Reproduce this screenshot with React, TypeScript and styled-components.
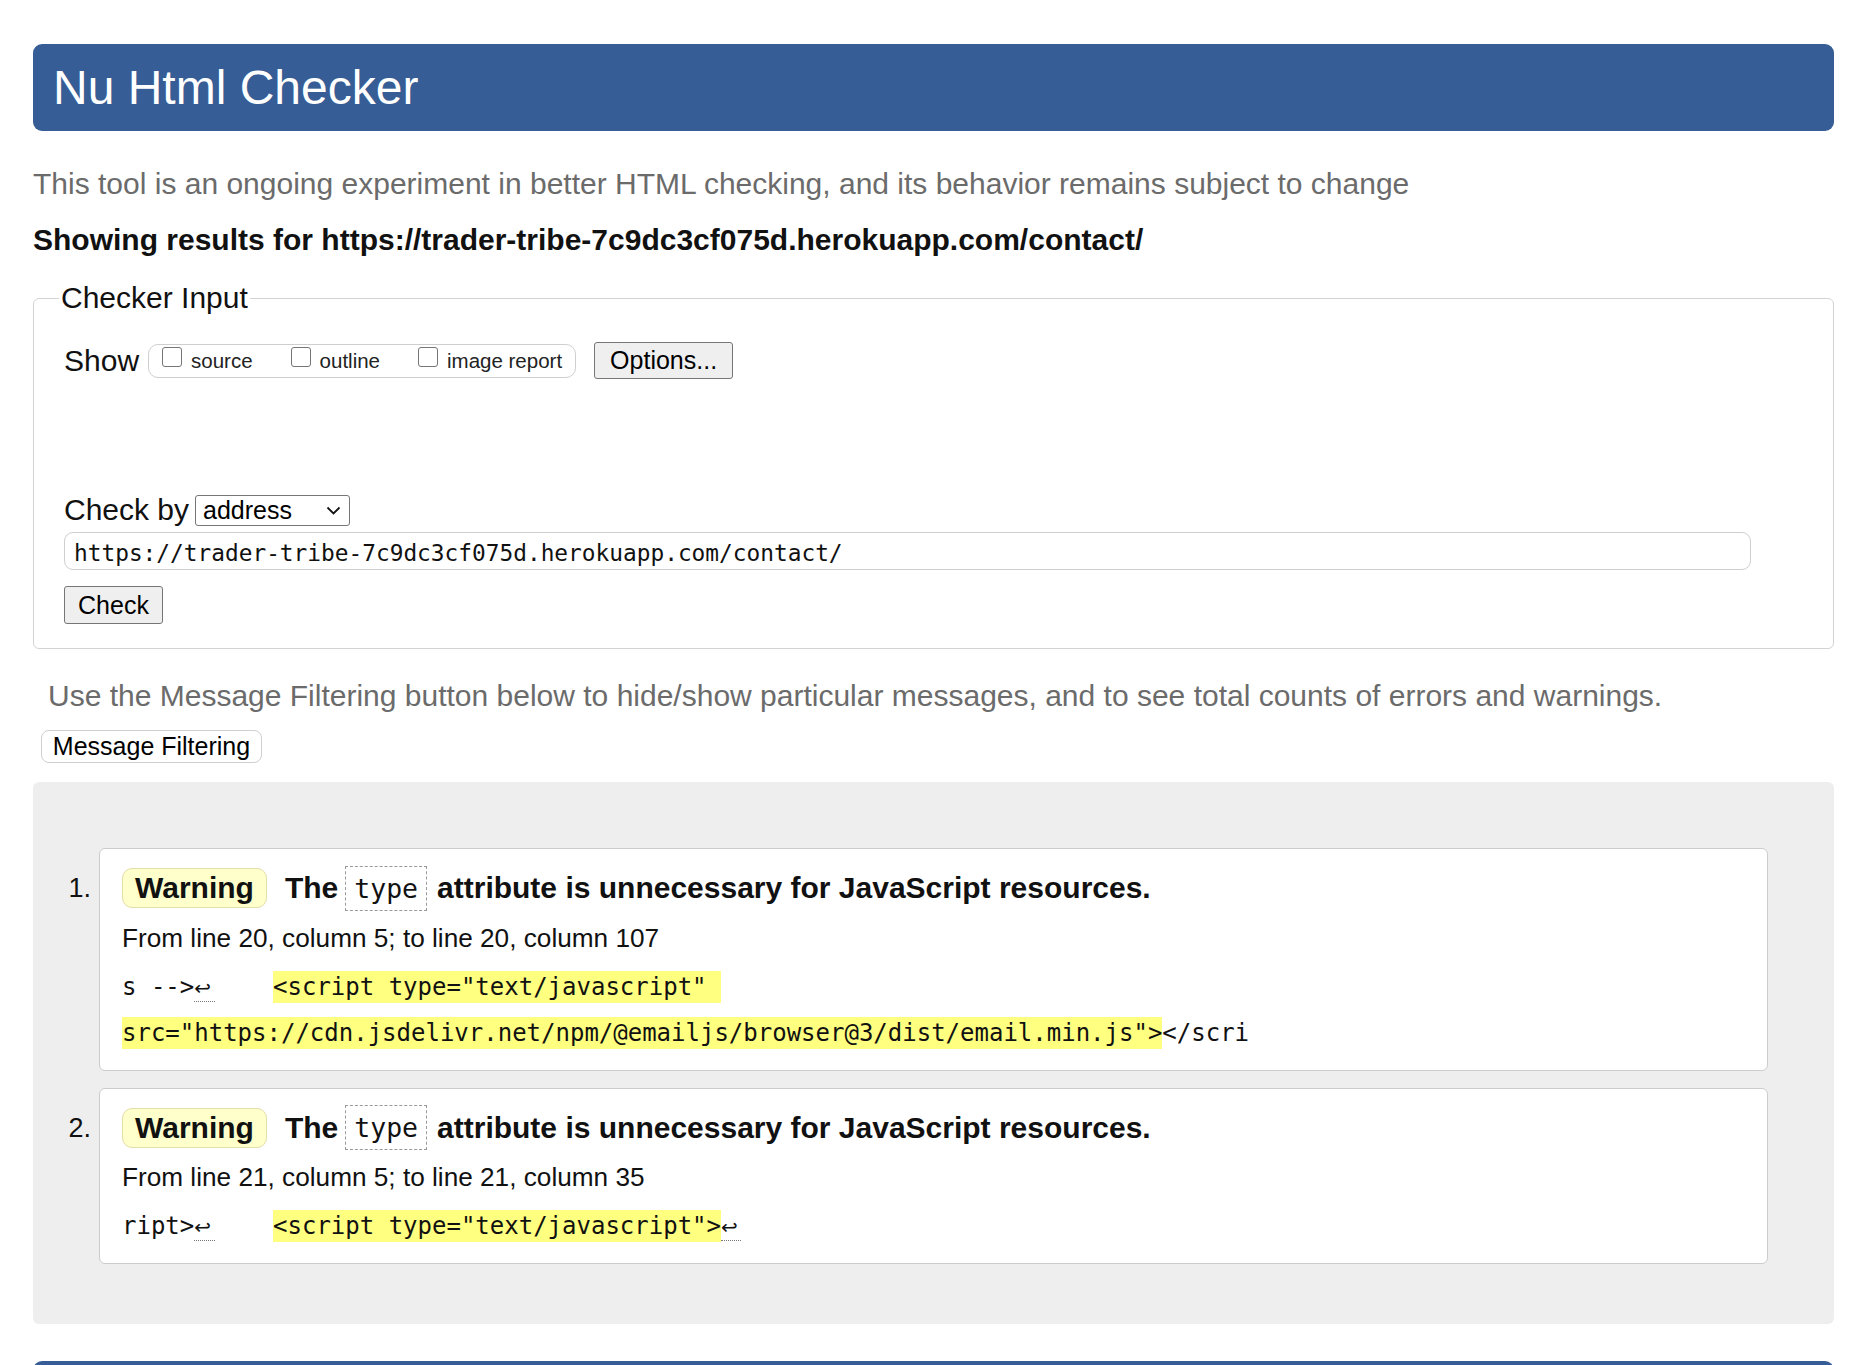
import styled, { createGlobalStyle } from "styled-components";

const GlobalStyle = createGlobalStyle`
  html, body {
    margin: 0;
    padding: 0;
    background: #fff;
  }
  body {
    font-family: "Liberation Sans", Arial, sans-serif;
    color: #000;
  }
`;

const MONO = `"DejaVu Sans Mono", "Liberation Mono", monospace`;

const Page = styled.div`
  width: 1801px;
  margin-left: 33px;
  padding-top: 44px;
`;

const Banner = styled.h1`
  margin: 0;
  height: 87px;
  display: flex;
  align-items: center;
  padding: 0 20px;
  background: #365d95;
  border-radius: 9px;
  color: #fff;
  font-size: 48px;
  font-weight: normal;
`;

const Note = styled.p<{ $top: number; $indent?: number }>`
  margin: ${({ $top }) => $top}px 0 0 ${({ $indent }) => $indent || 0}px;
  font-size: 30px;
  line-height: 36px;
  color: #6b6b6b;
`;

const ResultsFor = styled.h2`
  margin: 20px 0 0;
  font-size: 30px;
  line-height: 36px;
  font-weight: bold;
  color: #111;
`;

const Fieldset = styled.fieldset`
  margin: 22px 0 0;
  padding: 0 30px 24px;
  border: 1px solid #d3d3d3;
  border-radius: 6px;
  min-width: 0;
`;

const Legend = styled.legend`
  margin-left: -5px;
  padding: 0 2px;
  font-size: 30px;
  line-height: 36px;
  color: #111;
`;

const Row = styled.div<{ $top: number; $height: number }>`
  display: flex;
  align-items: center;
  margin-top: ${({ $top }) => $top}px;
  height: ${({ $height }) => $height}px;
`;

const Label = styled.span`
  font-size: 30px;
  line-height: 36px;
  color: #111;
`;

const CheckGroup = styled.div`
  display: flex;
  align-items: center;
  gap: 38px;
  height: 34px;
  box-sizing: border-box;
  margin-left: 9px;
  padding: 0 13px;
  border: 1px solid #cfcfcf;
  border-radius: 10px;
`;

const CheckOption = styled.label`
  display: flex;
  align-items: center;
  font-size: 20.5px;
  color: #222;
`;

const Box = styled.input`
  appearance: none;
  width: 20px;
  height: 20px;
  margin: -8px 9px 0 0;
  border: 1.5px solid #767676;
  border-radius: 3px;
  background: #fff;
`;

const Button = styled.button<{ $width: number; $height: number; $light?: boolean }>`
  width: ${({ $width }) => $width}px;
  height: ${({ $height }) => $height}px;
  padding: 0;
  font-family: "Liberation Sans", Arial, sans-serif;
  font-size: 25px;
  color: #000;
  background: ${({ $light }) => ($light ? "#fff" : "#efefef")};
  border: 1px solid ${({ $light }) => ($light ? "#cfcfcf" : "#767676")};
  border-radius: ${({ $light }) => ($light ? "8px" : "3px")};
`;

const OptionsButton = styled(Button)`
  margin-left: 18px;
`;

const SelectWrap = styled.div`
  position: relative;
  margin-left: 6px;
  width: 155px;
  height: 31px;
`;

const Select = styled.select`
  appearance: none;
  width: 100%;
  height: 100%;
  padding: 0 0 0 7px;
  font-family: "Liberation Sans", Arial, sans-serif;
  font-size: 25px;
  color: #000;
  background: #fff;
  border: 1px solid #767676;
  border-radius: 3px;
`;

const Chevron = styled.svg`
  position: absolute;
  right: 9px;
  top: 11px;
  pointer-events: none;
`;

const UrlInput = styled.input`
  display: block;
  box-sizing: border-box;
  width: 1687px;
  height: 38px;
  margin-top: 4px;
  padding: 3px 9px 0;
  font-family: ${MONO};
  font-size: 22.8px;
  color: #111;
  border: 1px solid #cfcfcf;
  border-radius: 9px;
`;

const CheckButton = styled(Button)`
  display: block;
  margin-top: 16px;
`;

const FilterButton = styled(Button)`
  display: block;
  margin: 16px 0 0 8px;
`;

const Panel = styled.div`
  margin-top: 19px;
  padding: 66px 66px 60px 8px;
  background: #eeeeee;
  border-radius: 6px;
  display: flex;
  flex-direction: column;
  gap: 17px;
`;

const MessageRow = styled.div`
  display: flex;
  align-items: flex-start;
`;

const Num = styled.div`
  width: 58px;
  box-sizing: border-box;
  padding-right: 8px;
  margin-top: 20px;
  text-align: right;
  font-size: 27px;
  line-height: 40px;
  color: #111;
`;

const Card = styled.div`
  flex: 1;
  padding: 16.5px 22px 14px;
  background: #fff;
  border: 1px solid #cccccc;
  border-radius: 6px;
`;

const Title = styled.div`
  display: flex;
  align-items: center;
  height: 45px;
  font-size: 30px;
  font-weight: bold;
  color: #111;
  white-space: nowrap;
`;

const Badge = styled.span`
  display: flex;
  align-items: center;
  height: 40px;
  box-sizing: border-box;
  margin-right: 18px;
  padding: 0 12px;
  background: #ffffcc;
  border: 1px solid #e2dea8;
  border-radius: 10px;
`;

const AttrCode = styled.code`
  display: flex;
  align-items: center;
  height: 45px;
  box-sizing: border-box;
  margin: 0 10px 0 7px;
  padding: 0 8px;
  font-family: ${MONO};
  font-size: 26.5px;
  font-weight: normal;
  border: 1px dashed #999;
`;

const Location = styled.p`
  margin: 9px 0 0;
  font-size: 26.2px;
  line-height: 36px;
  color: #111;
`;

const Extract = styled.p`
  margin: 8px 0 0;
  font-family: ${MONO};
  font-size: 24px;
  line-height: 46px;
  white-space: break-spaces;
  color: #111;
`;

const Mark = styled.mark`
  padding: 2px 0;
  background: #ffff80;
  color: #111;
`;

const LineFeed = styled.span<{ $wide?: boolean }>`
  display: inline-block;
  width: ${({ $wide }) => ($wide ? 21 : 20)}px;
  font-family: "DejaVu Sans", sans-serif;
  font-size: 20px;
  line-height: 1.3;
  text-align: left;
  vertical-align: baseline;
  border-bottom: 1px dotted #777;
`;

const Footer = styled.div`
  margin-top: 37px;
  height: 80px;
  background: #365d95;
  border-radius: 9px 9px 0 0;
`;

const url = "https://trader-tribe-7c9dc3cf075d.herokuapp.com/contact/";

type Message = {
  from: string;
  before: string;
  hilite: string;
  after: string;
  tailLf: boolean;
};

const messages: Message[] = [
  {
    from: "From line 20, column 5; to line 20, column 107",
    before: "s -->",
    hilite:
      '<script type="text/javascript" \nsrc="https://cdn.jsdelivr.net/npm/@emailjs/browser@3/dist/email.min.js">',
    after: "</scri",
    tailLf: false,
  },
  {
    from: "From line 21, column 5; to line 21, column 35",
    before: "ript>",
    hilite: '<script type="text/javascript">',
    after: "",
    tailLf: true,
  },
];

const App = () => {
  return (
    <Page>
      <GlobalStyle />
      <Banner>Nu Html Checker</Banner>
      <Note $top={35}>
        This tool is an ongoing experiment in better HTML checking, and its behavior remains
        subject to change
      </Note>
      <ResultsFor>Showing results for {url}</ResultsFor>

      <Fieldset>
        <Legend>Checker Input</Legend>
        <Row $top={26} $height={37}>
          <Label>Show</Label>
          <CheckGroup>
            <CheckOption>
              <Box type="checkbox" />
              source
            </CheckOption>
            <CheckOption>
              <Box type="checkbox" />
              outline
            </CheckOption>
            <CheckOption>
              <Box type="checkbox" />
              image report
            </CheckOption>
          </CheckGroup>
          <OptionsButton $width={139} $height={37}>
            Options...
          </OptionsButton>
        </Row>

        <Row $top={113} $height={36}>
          <Label>Check by</Label>
          <SelectWrap>
            <Select defaultValue="address">
              <option value="address">address</option>
              <option value="file">file upload</option>
              <option value="text">text input</option>
            </Select>
            <Chevron width="15" height="10" viewBox="0 0 15 10">
              <polyline points="1.5,1.5 7.5,7.5 13.5,1.5" fill="none" stroke="#111" strokeWidth="1.8" />
            </Chevron>
          </SelectWrap>
        </Row>
        <UrlInput defaultValue={url} />
        <CheckButton $width={99} $height={38}>
          Check
        </CheckButton>
      </Fieldset>

      <Note $top={29} $indent={15}>
        Use the Message Filtering button below to hide/show particular messages, and to see total
        counts of errors and warnings.
      </Note>
      <FilterButton $width={221} $height={33} $light>
        Message Filtering
      </FilterButton>

      <Panel>
        {messages.map((m, i) => (
          <MessageRow key={i}>
            <Num>{i + 1}.</Num>
            <Card>
              <Title>
                <Badge>Warning</Badge>
                The<AttrCode>type</AttrCode>attribute is unnecessary for JavaScript resources.
              </Title>
              <Location>{m.from}</Location>
              <Extract>
                {m.before}
                <LineFeed $wide>↩</LineFeed>
                {"    "}
                <Mark>{m.hilite}</Mark>
                {m.tailLf && <LineFeed>↩</LineFeed>}
                {m.after}
              </Extract>
            </Card>
          </MessageRow>
        ))}
      </Panel>
      <Footer />
    </Page>
  );
};

export default App;
